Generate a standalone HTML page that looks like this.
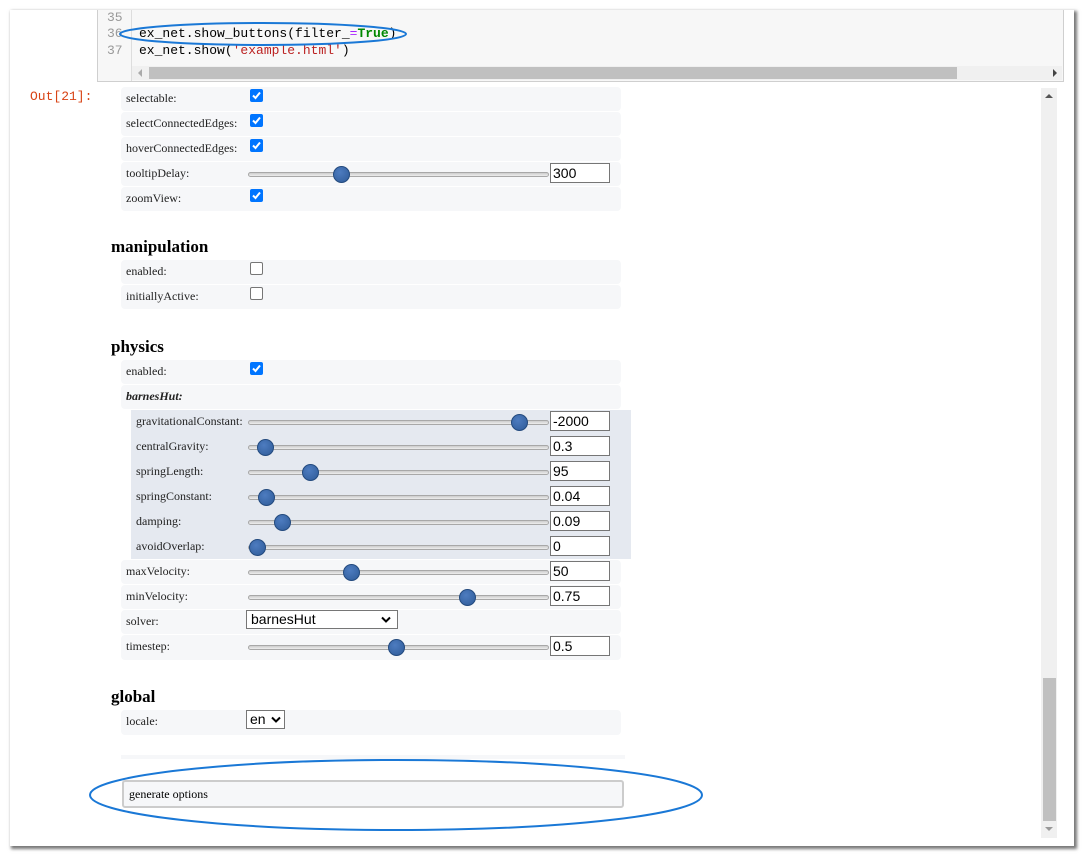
<!DOCTYPE html>
<html><head><meta charset="utf-8"><style>
body{margin:0;width:1084px;height:855px;background:#fff;position:relative;overflow:hidden;font-family:"Liberation Serif",serif}
.win{position:absolute;left:10px;top:10px;width:1064px;height:836px;background:#fff;box-shadow:2px 2px 3px 1px #777}
.a{position:absolute}
.code{left:97px;top:10px;width:965px;height:71px;background:#f7f7f7;border:1px solid #cfcfcf;border-top:none}
.gut{left:0;top:0;width:33px;height:71px;border-right:1px solid #ddd;background:#f7f7f7}
.ln{font-family:"Liberation Mono",monospace;font-size:13px;color:#999;left:9px}
.cl{font-family:"Liberation Mono",monospace;font-size:13px;color:#000;left:41px;white-space:pre}
.r{position:absolute;left:121px;width:500px;height:24px;background:#f6f7f9;border-radius:4px}
.r.i{left:131px;background:#e5e9f0;border-radius:0}
.lb{position:absolute;left:5px;top:4px;font-size:12px;color:#222}
.cb{position:absolute;left:129px;top:2px;width:13px;height:13px;border-radius:2px;background:#0075ff}
.cb svg{position:absolute;left:0;top:0}
.cb.off{background:#fff;border:1px solid #767676;width:11px;height:11px}
.tr{position:absolute;left:127px;top:10px;width:299px;height:3px;border:1px solid #a8a8a8;border-radius:3px;background:linear-gradient(#ccc,#eee)}
.i .tr{left:117px}
.th{position:absolute;top:4px;width:15px;height:15px;border-radius:50%;background:radial-gradient(circle at 40% 35%,#4d7cc0,#2f5b98);border:1px solid #234a7e}
.in{position:absolute;left:429px;top:1px;width:56px;height:18px;border:1px solid #767676;background:#fff;font-family:"Liberation Sans",sans-serif;font-size:14px;line-height:18px;padding-left:2px;color:#000}
.i .in{left:419px}
h3{position:absolute;left:111px;margin:0;font-size:17px;font-weight:bold;color:#000}
</style></head><body>
<div class="win"></div>
<div class="a code">
 <div class="a gut"></div>
 <div class="a ln" style="top:0px">35</div>
 <div class="a ln" style="top:16px">36</div>
 <div class="a ln" style="top:33px">37</div>
 <div class="a cl" style="top:16px">ex_net.show_buttons(filter_<span style="color:#a2f">=</span><span style="color:#080;font-weight:bold">True</span>)</div>
 <div class="a cl" style="top:33px">ex_net.show(<span style="color:#b22">'example.html'</span>)</div>
 <div class="a" style="left:34px;top:56px;width:930px;height:14px;background:#f0f0f0"></div>
 <div class="a" style="left:51px;top:57px;width:808px;height:12px;background:#c0c0c0"></div>
 <div class="a" style="left:40px;top:59px;width:0;height:0;border:4px solid transparent;border-right:4px solid #aaa;border-left:none"></div>
 <div class="a" style="left:955px;top:59px;width:0;height:0;border:4px solid transparent;border-left:4px solid #444;border-right:none"></div>
</div>
<svg class="a" style="left:118px;top:22px" width="292" height="26"><ellipse cx="145" cy="12" rx="143" ry="11" fill="none" stroke="#1a78d6" stroke-width="2"/></svg>
<div class="a" style="left:30px;top:89px;font-family:'Liberation Mono',monospace;font-size:13px;color:#d84315">Out[21]:</div>
<div class="a" style="left:1041px;top:88px;width:16px;height:750px;background:#f0f0f0"></div>
<div class="a" style="left:1043px;top:678px;width:13px;height:143px;background:#c0c0c0"></div>
<div class="a" style="left:1045px;top:94px;border:4px solid transparent;border-bottom:4px solid #555;border-top:none"></div>
<div class="a" style="left:1045px;top:827px;border:4px solid transparent;border-top:4px solid #999;border-bottom:none"></div>

<div class="r" style="top:87px"><span class="lb">selectable:</span><span class="cb"><svg width="13" height="13"><path d="M3 6.5L5.5 9L10 3.5" fill="none" stroke="#fff" stroke-width="2"/></svg></span></div>
<div class="r" style="top:112px"><span class="lb">selectConnectedEdges:</span><span class="cb"><svg width="13" height="13"><path d="M3 6.5L5.5 9L10 3.5" fill="none" stroke="#fff" stroke-width="2"/></svg></span></div>
<div class="r" style="top:137px"><span class="lb">hoverConnectedEdges:</span><span class="cb"><svg width="13" height="13"><path d="M3 6.5L5.5 9L10 3.5" fill="none" stroke="#fff" stroke-width="2"/></svg></span></div>
<div class="r" style="top:162px"><span class="lb">tooltipDelay:</span><span class="tr"></span><span class="th" style="left:212px"></span><span class="in">300</span></div>
<div class="r" style="top:187px"><span class="lb">zoomView:</span><span class="cb"><svg width="13" height="13"><path d="M3 6.5L5.5 9L10 3.5" fill="none" stroke="#fff" stroke-width="2"/></svg></span></div>

<h3 style="top:237px">manipulation</h3>
<div class="r" style="top:260px"><span class="lb">enabled:</span><span class="cb off"></span></div>
<div class="r" style="top:285px"><span class="lb">initiallyActive:</span><span class="cb off"></span></div>

<h3 style="top:337px">physics</h3>
<div class="r" style="top:360px"><span class="lb">enabled:</span><span class="cb"><svg width="13" height="13"><path d="M3 6.5L5.5 9L10 3.5" fill="none" stroke="#fff" stroke-width="2"/></svg></span></div>
<div class="r" style="top:385px"><span class="lb" style="font-style:italic;font-weight:bold">barnesHut:</span></div>
<div class="r i" style="top:410px;height:25px"><span class="lb">gravitationalConstant:</span><span class="tr"></span><span class="th" style="left:380px"></span><span class="in">-2000</span></div>
<div class="r i" style="top:435px;height:25px"><span class="lb">centralGravity:</span><span class="tr"></span><span class="th" style="left:126px"></span><span class="in">0.3</span></div>
<div class="r i" style="top:460px;height:25px"><span class="lb">springLength:</span><span class="tr"></span><span class="th" style="left:171px"></span><span class="in">95</span></div>
<div class="r i" style="top:485px;height:25px"><span class="lb">springConstant:</span><span class="tr"></span><span class="th" style="left:127px"></span><span class="in">0.04</span></div>
<div class="r i" style="top:510px;height:25px"><span class="lb">damping:</span><span class="tr"></span><span class="th" style="left:143px"></span><span class="in">0.09</span></div>
<div class="r i" style="top:535px;height:24px"><span class="lb">avoidOverlap:</span><span class="tr"></span><span class="th" style="left:118px"></span><span class="in">0</span></div>
<div class="r" style="top:560px"><span class="lb">maxVelocity:</span><span class="tr"></span><span class="th" style="left:222px"></span><span class="in">50</span></div>
<div class="r" style="top:585px"><span class="lb">minVelocity:</span><span class="tr"></span><span class="th" style="left:338px"></span><span class="in">0.75</span></div>
<div class="r" style="top:610px"><span class="lb">solver:</span><span class="a" style="left:125px;top:0;width:146px;height:17px;border:1px solid #767676;background:#fff;font-family:'Liberation Sans',sans-serif;font-size:14px;line-height:17px;padding-left:4px">barnesHut<svg class="a" style="left:134px;top:5px" width="10" height="8"><path d="M1 1.5L5 5.5L9 1.5" fill="none" stroke="#000" stroke-width="2"/></svg></span></div>
<div class="r" style="top:635px;height:25px"><span class="lb">timestep:</span><span class="tr"></span><span class="th" style="left:267px"></span><span class="in">0.5</span></div>

<h3 style="top:687px">global</h3>
<div class="r" style="top:710px;height:25px"><span class="lb">locale:</span><span class="a" style="left:125px;top:0;width:34px;height:17px;border:1px solid #767676;background:#fff;font-family:'Liberation Sans',sans-serif;font-size:14px;line-height:17px;padding-left:3px">en<svg class="a" style="left:24px;top:5px" width="10" height="8"><path d="M1 1.5L5 5.5L9 1.5" fill="none" stroke="#000" stroke-width="2"/></svg></span></div>
<div class="a" style="left:121px;top:755px;width:504px;height:4px;background:#f6f7f9"></div>
<div class="a" style="left:122px;top:780px;width:498px;height:24px;background:#f6f7f9;border:2px solid #ccc;border-radius:3px"><span class="a" style="left:5px;top:5px;font-size:12px">generate options</span></div>
<svg class="a" style="left:88px;top:759px" width="618" height="74"><ellipse cx="308" cy="36" rx="306" ry="35" fill="none" stroke="#1a78d6" stroke-width="2"/></svg>
</body></html>
